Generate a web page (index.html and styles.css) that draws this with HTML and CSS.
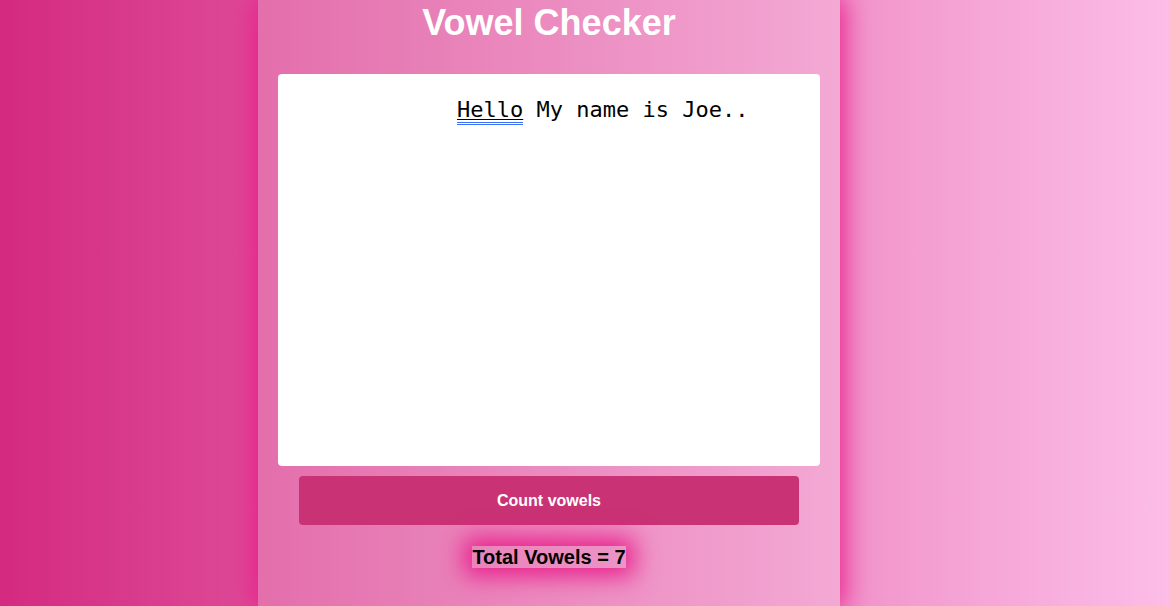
FILE: index.html
```html
<!DOCTYPE html>
<html lang="en">
<head>
<meta charset="utf-8">
<title>Vowel Checker</title>
<link rel="stylesheet" href="styles.css">
</head>
<body>
<main class="panel">
  <h1 class="title">Vowel Checker</h1>
  <div class="input" contenteditable="true" spellcheck="false"><span class="word">Hello</span> My name is Joe..</div>
  <button class="btn" type="button">Count vowels</button>
  <p class="result"><span class="result-text">Total Vowels = 7</span></p>
</main>
</body>
</html>
```

FILE: styles.css
```css
html, body {
  margin: 0;
  padding: 0;
  height: 100%;
}
body {
  background: linear-gradient(to right, #d42a80, #fcbde7);
  font-family: "Liberation Sans", Arial, sans-serif;
  overflow: hidden;
}
.panel {
  box-sizing: border-box;
  width: 582px;
  height: 606px;
  margin-left: 258px;
  background: rgba(255, 255, 255, 0.2);
  box-shadow: 0 0 26px 4px #e91e8c;
  display: flex;
  flex-direction: column;
  align-items: center;
  padding-top: 2px;
}
.title {
  margin: 0;
  font-size: 36px;
  font-weight: bold;
  color: #fff;
  line-height: 41px;
}
.input {
  box-sizing: border-box;
  width: 542px;
  height: 392px;
  margin-top: 31px;
  background: #fff;
  border-radius: 4px;
  padding: 23px 10px 10px 179px;
  font-family: "DejaVu Sans Mono", monospace;
  font-size: 22px;
  line-height: 26px;
  color: #000;
  outline: none;
  white-space: pre;
}
.word {
  display: inline-block;
  line-height: 25px;
  text-decoration: underline;
  text-decoration-color: #000;
  text-decoration-thickness: 1px;
  text-underline-offset: 2px;
  border-bottom: 3px double #3c6ff2;
}
.btn {
  margin-top: 10px;
  width: 500px;
  height: 49px;
  border: none;
  border-radius: 4px;
  background: #c93275;
  color: #fff;
  font-family: "Liberation Sans", Arial, sans-serif;
  font-size: 16px;
  font-weight: bold;
  cursor: pointer;
}
.result {
  margin: 21px 0 0;
  line-height: 23px;
}
.result-text {
  font-size: 20px;
  font-weight: bold;
  color: #000;
  box-shadow: 0 0 24px 8px #e91e8c;
}
```
